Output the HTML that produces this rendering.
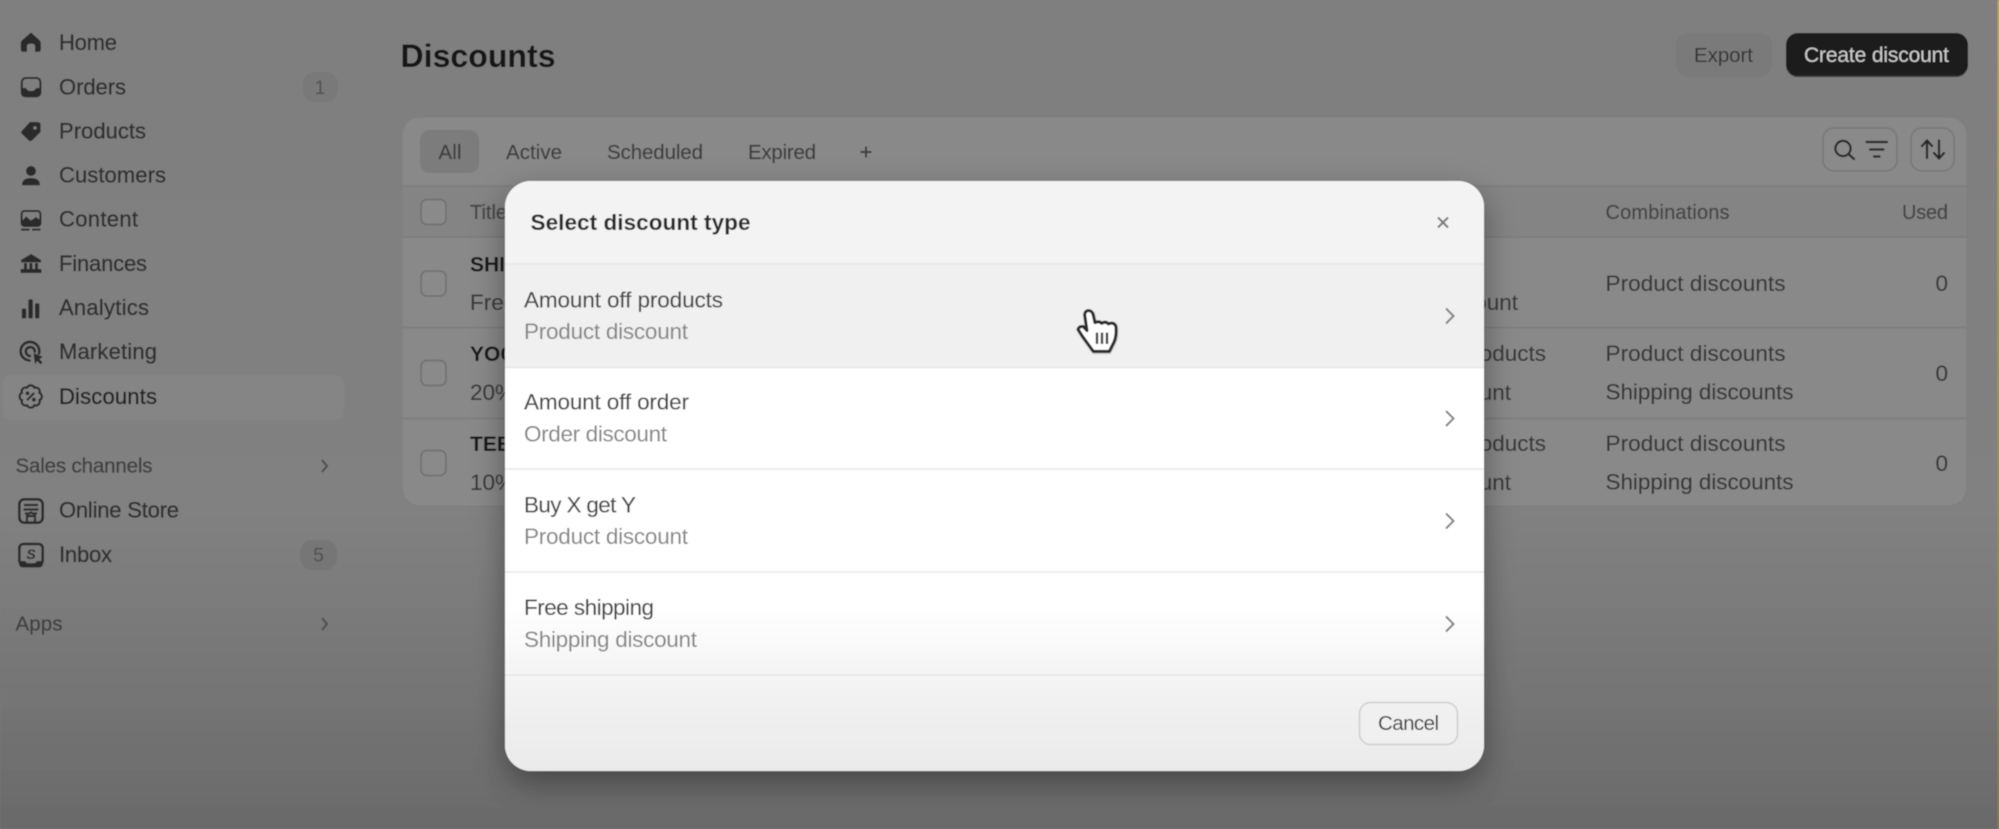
<!DOCTYPE html>
<html><head><meta charset="utf-8"><title>Discounts</title>
<style>
html,body{margin:0;padding:0;width:1999px;height:829px;overflow:hidden;background:#7c7c7c}
svg{display:block;position:absolute;left:0;top:0}
text{font-family:"Liberation Sans",sans-serif;font-size:22px;fill:#333}
.nav{fill:#2f2f2f;stroke:#2f2f2f;stroke-width:.3;font-size:22px}
.sec{fill:#3f3f3f;font-size:20.5px;stroke:#3f3f3f;stroke-width:.3}
.bd{fill:#505050;font-size:19px;text-anchor:middle}
.tab{fill:#3c3c3c;font-size:20.5px;stroke:#3c3c3c;stroke-width:.15}
.th{fill:#434343;font-size:20px;stroke:#434343;stroke-width:.15}
.td{fill:#363636;font-size:22.5px;stroke:#363636;stroke-width:.1}
.b{fill:#161616;font-weight:bold;font-size:21px}
.mt{fill:#444;font-size:22.5px;stroke:#444;stroke-width:.1}
.ms{fill:#848484;font-size:22.5px}
</style></head><body>
<svg width="1999" height="829" viewBox="0 0 1999 829" xmlns="http://www.w3.org/2000/svg">
<defs>
<linearGradient id="bg" gradientUnits="userSpaceOnUse" x1="0" y1="0" x2="0" y2="829">
<stop offset="0" stop-color="#7f7f7f"/><stop offset=".62" stop-color="#818181"/><stop offset=".82" stop-color="#767676"/><stop offset="1" stop-color="#6a6a6a"/>
</linearGradient>
<linearGradient id="md" gradientUnits="userSpaceOnUse" x1="0" y1="181" x2="0" y2="771">
<stop offset="0" stop-color="#f3f3f3"/><stop offset=".14" stop-color="#f3f3f3"/><stop offset=".32" stop-color="#ffffff"/><stop offset=".72" stop-color="#ffffff"/><stop offset=".84" stop-color="#f4f4f4"/><stop offset="1" stop-color="#eaeaea"/>
</linearGradient>
<linearGradient id="yl" x1="0" y1="0" x2="0" y2="1"><stop offset="0" stop-color="#c9a95c"/><stop offset="1" stop-color="#8a7a55"/></linearGradient>
<filter id="sh" x="-15%" y="-15%" width="130%" height="135%"><feDropShadow dx="0" dy="12" stdDeviation="16" flood-color="#000" flood-opacity=".38"/></filter>
<filter id="soft"><feGaussianBlur stdDeviation=".6"/></filter>
<filter id="hs" x="-30%" y="-30%" width="160%" height="160%"><feDropShadow dx="1" dy="2" stdDeviation="1.5" flood-color="#000" flood-opacity=".35"/></filter>
<clipPath id="mc"><rect x="505" y="181" width="979" height="590" rx="26"/></clipPath>
</defs>
<g filter="url(#soft)">
<rect width="1999" height="829" fill="url(#bg)"/>
<rect x="1997.5" y="0" width="1.5" height="829" fill="url(#yl)"/>

<!-- sidebar -->
<rect x="3" y="375" width="341" height="45" rx="9" fill="#858585"/>
<rect x="303" y="72" width="35" height="30" rx="12" fill="#797979"/>
<rect x="300" y="540" width="37" height="30" rx="12" fill="#767676"/>

<g fill="#2b2b2b">
<path d="M31 32.5L21.8 40.5Q20.8 41.4 20.8 43V49.5Q20.8 51.8 23 51.8H27V46Q27 43.6 31 43.6Q35 43.6 35 46V51.8H38.6Q40.8 51.8 40.8 49.5V43Q40.8 41.4 39.8 40.5Z"/>
<rect x="21.8" y="78" width="18.6" height="18.4" rx="4" fill="none" stroke="#2b2b2b" stroke-width="2"/>
<path d="M21 88H26Q27 91 31 91T36 88H41V92.5Q41 97 37 97H25Q21 97 21 92.5Z"/>
<path d="M30 122H37.5Q40.6 122 40.6 125V132L32 140.5Q30.4 141.8 28.7 140.5L22 134Q20.4 132.4 22 130.6ZM35 126.2A1.7 1.7 0 1 0 35 129.6A1.7 1.7 0 1 0 35 126.2Z" fill-rule="evenodd"/>
<circle cx="31" cy="171" r="5"/>
<path d="M22 185.3Q21.8 178 31 178Q40 178 40 185.3Z"/>
<rect x="21.6" y="211" width="18.8" height="15" rx="3" fill="none" stroke="#2b2b2b" stroke-width="2"/>
<path d="M22 221L26 216.5L31 220.5L36 217L40 220V223Q40 225.5 38 225.5H24Q22 225.5 22 223Z"/>
<rect x="21" y="228.6" width="8.5" height="2"/><rect x="32" y="228.6" width="8.5" height="2"/>
<path d="M31 254L41 260V262.4H21V260Z"/>
<rect x="24" y="263" width="3" height="6"/><rect x="29.4" y="263" width="3" height="6"/><rect x="35" y="263" width="3" height="6"/>
<rect x="20.5" y="269" width="21" height="4" rx="1"/>
<rect x="21.8" y="308.5" width="4.4" height="10" rx="1.6"/>
<rect x="28.4" y="299.3" width="4.4" height="19.2" rx="1.6"/>
<rect x="35" y="303.3" width="4.4" height="15.2" rx="1.6"/>
<path d="M33.5 353L43 357L39.3 359L42.6 362.6L40.6 364.4L37.2 361L35 364.4Z"/>
</g>
<g fill="none" stroke="#2b2b2b" stroke-width="2.6" stroke-linecap="round">
<path d="M39 353.5A9.3 9.3 0 1 0 29.5 360.5"/>
<path d="M34.8 351.5A4.5 4.5 0 1 0 30 356"/>
</g>
<g transform="translate(30.7 396.5)" fill="none" stroke="#2b2b2b" stroke-width="2.2">
<path d="M8.78-3.64A4 4 0 0 1 8.78 3.64A4 4 0 0 1 3.64 8.78A4 4 0 0 1-3.64 8.78A4 4 0 0 1-8.78 3.64A4 4 0 0 1-8.78-3.64A4 4 0 0 1-3.64-8.78A4 4 0 0 1 3.64-8.78A4 4 0 0 1 8.78-3.64Z"/>
<path d="M-3.6 3.6L3.6-3.6"/>
<circle cx="-3.2" cy="-3.2" r=".8" fill="#2b2b2b"/><circle cx="3.2" cy="3.2" r=".8" fill="#2b2b2b"/>
</g>
<g fill="none" stroke="#2b2b2b" stroke-width="2.6">
<rect x="19.3" y="499.3" width="23.4" height="23.4" rx="5"/>
<path d="M24 505H38M23.5 509.5H38.5M25 513Q28 514.5 31 512.5Q34 514.5 37 513M27 522V516H35V522" stroke-width="2.2"/>
<rect x="19.3" y="544" width="23.4" height="20.5" rx="4"/>
</g>
<path d="M19 561H25Q27 564 31 564T37 561H43V563.5Q43 567.5 38.5 567.5H23.5Q19 567.5 19 563.5Z" fill="#2b2b2b"/>
<text x="31" y="559" text-anchor="middle" style="font-size:14px;font-style:italic;font-weight:bold;fill:#2b2b2b">S</text>

<text class="nav" x="59" y="50" textLength="58" lengthAdjust="spacing">Home</text>
<text class="nav" x="59" y="94.5" textLength="67" lengthAdjust="spacing">Orders</text>
<text class="nav" x="59" y="138.5" textLength="87" lengthAdjust="spacing">Products</text>
<text class="nav" x="59" y="182.5" textLength="107" lengthAdjust="spacing">Customers</text>
<text class="nav" x="59" y="226.5" textLength="79" lengthAdjust="spacing">Content</text>
<text class="nav" x="59" y="271" textLength="88" lengthAdjust="spacing">Finances</text>
<text class="nav" x="59" y="315" textLength="90" lengthAdjust="spacing">Analytics</text>
<text class="nav" x="59" y="359" textLength="98" lengthAdjust="spacing">Marketing</text>
<text class="nav" x="59" y="404" textLength="98" lengthAdjust="spacing" style="fill:#232323;stroke:#232323">Discounts</text>
<text class="sec" x="15.5" y="472.5" textLength="137" lengthAdjust="spacing">Sales channels</text>
<text class="nav" x="59" y="517.5" textLength="120" lengthAdjust="spacing">Online Store</text>
<text class="nav" x="59" y="562" textLength="53" lengthAdjust="spacing">Inbox</text>
<text class="sec" x="15.5" y="630.5" textLength="47" lengthAdjust="spacing">Apps</text>
<text class="bd" x="320" y="94">1</text>
<text class="bd" x="318.5" y="561.5">5</text>
<g fill="none" stroke="#4d4d4d" stroke-width="2"><path d="M322 460L327 466L322 472"/><path d="M322 618L327 624L322 630"/></g>

<!-- header -->
<text x="400.5" y="67" textLength="155" lengthAdjust="spacing" style="font-size:32px;font-weight:bold;fill:#161616">Discounts</text>
<rect x="1676" y="33" width="96" height="44" rx="12" fill="#7a7a7a"/>
<text x="1694" y="62" textLength="59" lengthAdjust="spacing" style="font-size:20.5px;fill:#333">Export</text>
<rect x="1786" y="33" width="182" height="44" rx="12" fill="#1e1e1e"/>
<path d="M1788 70Q1790 76 1798 76H1956Q1964 76 1966 70" fill="none" stroke="#3a3a3a" stroke-width="1"/>
<text x="1804" y="62" textLength="145" lengthAdjust="spacing" style="font-size:21px;fill:#cbcbcb">Create discount</text>

<!-- card -->
<rect x="402" y="117" width="1565" height="389" rx="18" fill="#898989" stroke="#7e7e7e" stroke-width="1"/>
<rect x="402.5" y="186" width="1564" height="51" fill="#848484"/>
<g stroke="#7c7c7c" stroke-width="1.4"><path d="M402 186H1967M402 237H1967M402 327.5H1967M402 418.5H1967"/></g>
<rect x="420" y="130" width="59" height="43" rx="10" fill="#7c7c7c"/>
<text class="tab" x="438.5" y="159" textLength="23" lengthAdjust="spacing">All</text>
<text class="tab" x="506" y="159" textLength="56" lengthAdjust="spacing">Active</text>
<text class="tab" x="607" y="159" textLength="96" lengthAdjust="spacing">Scheduled</text>
<text class="tab" x="748" y="159" textLength="68" lengthAdjust="spacing">Expired</text>
<path d="M860.5 152H871.5M866 146.5V157.5" stroke="#3a3a3a" stroke-width="2" fill="none"/>
<rect x="1823" y="128" width="74" height="43" rx="11" fill="#8a8a8a" stroke="#777" stroke-width="1.5"/>
<rect x="1911" y="128" width="43" height="43" rx="11" fill="#8a8a8a" stroke="#777" stroke-width="1.5"/>
<g fill="none" stroke="#262626" stroke-width="2.2" stroke-linecap="round">
<circle cx="1843" cy="148.5" r="7.6"/><path d="M1849 154.5L1854 159"/>
<path d="M1866.5 142H1887M1870 149.5H1883.5M1874 156.5H1879.5"/>
<path d="M1927 158V141M1922 146L1927 140.5L1932 146"/>
<path d="M1939 140.5V158M1934 153L1939 158.5L1944 153"/>
</g>
<g fill="#8a8a8a" stroke="#6e6e6e" stroke-width="1.5">
<rect x="421" y="199.5" width="25" height="25" rx="6"/>
<rect x="421" y="271" width="25" height="25" rx="6"/>
<rect x="421" y="360.5" width="25" height="25" rx="6"/>
<rect x="421" y="450.5" width="25" height="25" rx="6"/>
</g>
<text class="th" x="470" y="219">Title</text>
<text class="b" x="470" y="271.5">SHIPPING</text>
<text class="td" x="470" y="310">Free shipping</text>
<text class="b" x="470" y="361">YOGA</text>
<text class="td" x="470" y="400">20% off</text>
<text class="b" x="470" y="451">TEE</text>
<text class="td" x="470" y="490">10% off</text>
<text class="td" x="1518" y="310" text-anchor="end">Shipping discount</text>
<text class="td" x="1546" y="361" text-anchor="end">Amount off products</text>
<text class="td" x="1511" y="400" text-anchor="end">Order discount</text>
<text class="td" x="1546" y="451" text-anchor="end">Amount off products</text>
<text class="td" x="1511" y="490" text-anchor="end">Order discount</text>
<text class="th" x="1605.5" y="219" textLength="124" lengthAdjust="spacing">Combinations</text>
<text class="th" x="1902" y="219" textLength="46" lengthAdjust="spacing">Used</text>
<text class="td" x="1605.5" y="291" textLength="180" lengthAdjust="spacing">Product discounts</text>
<text class="td" x="1605.5" y="361" textLength="180" lengthAdjust="spacing">Product discounts</text>
<text class="td" x="1605.5" y="399.5" textLength="188" lengthAdjust="spacing">Shipping discounts</text>
<text class="td" x="1605.5" y="451" textLength="180" lengthAdjust="spacing">Product discounts</text>
<text class="td" x="1605.5" y="489.5" textLength="188" lengthAdjust="spacing">Shipping discounts</text>
<text class="td" x="1948" y="291" text-anchor="end">0</text>
<text class="td" x="1948" y="381" text-anchor="end">0</text>
<text class="td" x="1948" y="471" text-anchor="end">0</text>

<!-- modal -->
<rect x="505" y="181" width="979" height="590" rx="26" fill="#eee" filter="url(#sh)"/>
<g clip-path="url(#mc)">
<rect x="505" y="181" width="979" height="590" fill="url(#md)"/>
<rect x="505" y="264" width="979" height="103" fill="#f0f0f0"/>
<g stroke="#e6e6e6" stroke-width="1.5"><path d="M505 264H1484M505 367.5H1484M505 469H1484M505 572H1484M505 675H1484"/></g>
</g>
<text x="530.5" y="230" textLength="220" lengthAdjust="spacing" style="font-size:22.5px;fill:#2a2a2a;font-weight:bold">Select discount type</text>
<path d="M1438 217.5L1448 227.5M1448 217.5L1438 227.5" stroke="#777" stroke-width="2" fill="none"/>
<text class="mt" x="524" y="307.5" textLength="199" lengthAdjust="spacing">Amount off products</text>
<text class="ms" x="524" y="339" textLength="164" lengthAdjust="spacing">Product discount</text>
<text class="mt" x="524" y="409.5" textLength="165" lengthAdjust="spacing">Amount off order</text>
<text class="ms" x="524" y="441.5" textLength="143" lengthAdjust="spacing">Order discount</text>
<text class="mt" x="524" y="512.5" textLength="112" lengthAdjust="spacing">Buy X get Y</text>
<text class="ms" x="524" y="544" textLength="164" lengthAdjust="spacing">Product discount</text>
<text class="mt" x="524" y="615" textLength="130" lengthAdjust="spacing">Free shipping</text>
<text class="ms" x="524" y="647" textLength="173" lengthAdjust="spacing">Shipping discount</text>
<g fill="none" stroke="#808080" stroke-width="2"><path d="M1446 308.5L1453.5 316L1446 323.5"/><path d="M1446 411L1453.5 418.5L1446 426"/><path d="M1446 513.5L1453.5 521L1446 528.5"/><path d="M1446 616.5L1453.5 624L1446 631.5"/></g>
<rect x="1359.5" y="702.5" width="98" height="42" rx="11" fill="#f0f0f0" stroke="#cdcdcd" stroke-width="1.5"/>
<text x="1378" y="730" textLength="61" lengthAdjust="spacing" style="font-size:20.5px;fill:#3a3a3a">Cancel</text>

<!-- hand cursor -->
<g transform="translate(1040 280) scale(.3333)" filter="url(#hs)">
<path d="M114 148Q118 138 130 140L141 152L134 104Q136 90 148 92Q158 94 160 106L165 128Q178 122 185 130Q197 122 205 132Q222 124 228 140Q230 170 222 186L208 214H160L128 170Z" fill="#fff" stroke="#2a2a2a" stroke-width="9" stroke-linejoin="round"/>
<path d="M171 158V192M186 158V192M201 158V192" stroke="#3a3a3a" stroke-width="7" fill="none"/>
</g>
</g>
</svg>
</body></html>
